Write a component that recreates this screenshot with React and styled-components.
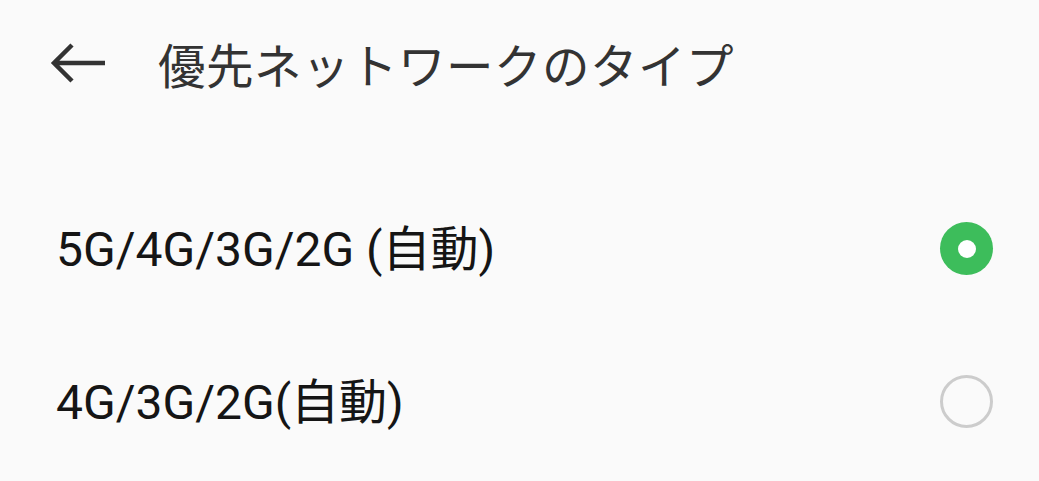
import React, { useState } from "react";
import styled, { createGlobalStyle } from "styled-components";

const Global = createGlobalStyle`
  html, body { margin: 0; padding: 0; background: #fafafa; }
  body { font-family: Roboto, "Noto Sans CJK JP", sans-serif; }
`;

const Page = styled.div`
  width: 1039px;
  height: 481px;
  background: #fafafa;
  overflow: hidden;
`;

const Header = styled.header`
  height: 126px;
  display: flex;
  align-items: center;
  padding-left: 50px;
  box-sizing: border-box;
`;

const BackButton = styled.button`
  width: 58px;
  height: 58px;
  border: 0;
  background: none;
  padding: 0;
  display: flex;
  align-items: center;
  justify-content: flex-start;
  margin-right: 50px;
`;

const Title = styled.h1`
  margin: 0;
  font-family: "Noto Sans CJK JP", sans-serif;
  font-weight: 400;
  font-size: 47.5px;
  color: #333333;
  letter-spacing: 0.5px;
`;

const List = styled.ul`
  list-style: none;
  margin: 46px 0 0;
  padding: 0;
`;

const Row = styled.li`
  height: 153px;
  display: flex;
  align-items: center;
  justify-content: space-between;
  padding: 0 46px 0 56px;
  box-sizing: border-box;
  cursor: pointer;
`;

const Label = styled.span`
  font-family: Roboto, "Noto Sans CJK JP", sans-serif;
  font-size: 48px;
  color: #151515;
  margin-bottom: 8px;
`;

const Radio = styled.span`
  width: 53px;
  height: 53px;
  border-radius: 50%;
  box-sizing: border-box;
  display: flex;
  align-items: center;
  justify-content: center;
  background: ${(p) => (p.$checked ? "#3dbd5b" : "transparent")};
  border: ${(p) => (p.$checked ? "none" : "3px solid #cccccc")};
  &::after {
    content: "";
    display: ${(p) => (p.$checked ? "block" : "none")};
    width: 18px;
    height: 18px;
    border-radius: 50%;
    background: #ffffff;
  }
`;

const options = ["5G/4G/3G/2G (自動)", "4G/3G/2G(自動)"];

export default function App() {
  const [sel, setSel] = useState(0);
  return (
    <Page>
      <Global />
      <Header>
        <BackButton aria-label="back">
          <svg width="56" height="42" viewBox="0 0 56 42">
            <path
              d="M55 21H5M22 3L4 21l18 18"
              fill="none"
              stroke="#333"
              strokeWidth="4.5"
              strokeLinecap="butt"
              strokeLinejoin="miter"
            />
          </svg>
        </BackButton>
        <Title>優先ネットワークのタイプ</Title>
      </Header>
      <List>
        {options.map((o, i) => (
          <Row key={o} onClick={() => setSel(i)}>
            <Label>{o}</Label>
            <Radio $checked={sel === i} />
          </Row>
        ))}
      </List>
    </Page>
  );
}
